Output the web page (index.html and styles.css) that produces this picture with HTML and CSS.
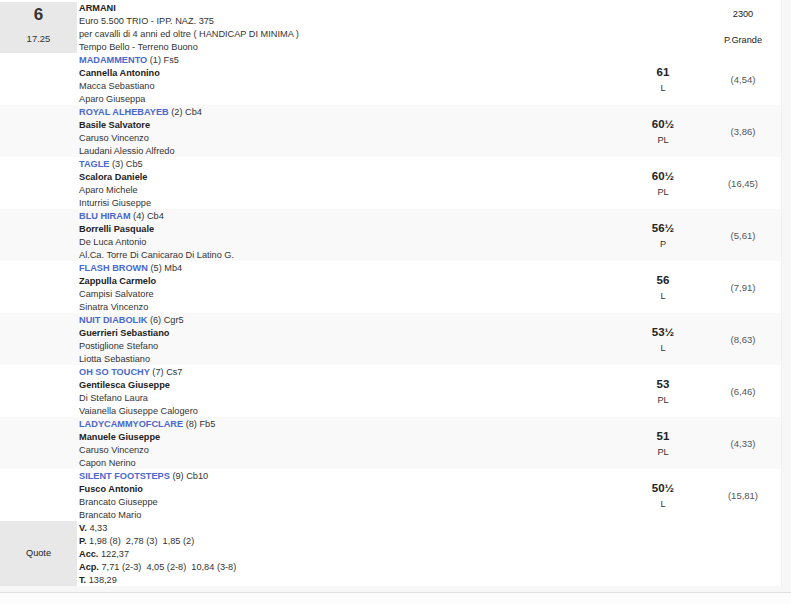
FILE: index.html
```html
<!DOCTYPE html>
<html>
<head>
<meta charset="utf-8">
<link rel="stylesheet" href="styles.css">
</head>
<body>
<div class="race">
  <div class="row head">
    <div class="c1 box">
      <div class="num">6</div>
      <div class="time">17.25</div>
    </div>
    <div class="c2">
      <div class="b">ARMANI</div>
      <div>Euro 5.500 TRIO - IPP. NAZ. 375</div>
      <div>per cavalli di 4 anni ed oltre ( HANDICAP DI MINIMA )</div>
      <div>Tempo Bello - Terreno Buono</div>
    </div>
    <div class="c3"></div>
    <div class="c4 headinfo">
      <div>2300</div>
      <div>P.Grande</div>
    </div>
  </div>

  <div class="row horse">
    <div class="c1"></div>
    <div class="c2">
      <div><span class="name">MADAMMENTO</span> (1) Fs5</div>
      <div class="b">Cannella Antonino</div>
      <div>Macca Sebastiano</div>
      <div>Aparo Giuseppa</div>
    </div>
    <div class="c3"><div class="w">61</div><div class="l">L</div></div>
    <div class="c4 q">(4,54)</div>
  </div>

  <div class="row horse alt">
    <div class="c1"></div>
    <div class="c2">
      <div><span class="name">ROYAL ALHEBAYEB</span> (2) Cb4</div>
      <div class="b">Basile Salvatore</div>
      <div>Caruso Vincenzo</div>
      <div>Laudani Alessio Alfredo</div>
    </div>
    <div class="c3"><div class="w">60½</div><div class="l">PL</div></div>
    <div class="c4 q">(3,86)</div>
  </div>

  <div class="row horse">
    <div class="c1"></div>
    <div class="c2">
      <div><span class="name">TAGLE</span> (3) Cb5</div>
      <div class="b">Scalora Daniele</div>
      <div>Aparo Michele</div>
      <div>Inturrisi Giuseppe</div>
    </div>
    <div class="c3"><div class="w">60½</div><div class="l">PL</div></div>
    <div class="c4 q">(16,45)</div>
  </div>

  <div class="row horse alt">
    <div class="c1"></div>
    <div class="c2">
      <div><span class="name">BLU HIRAM</span> (4) Cb4</div>
      <div class="b">Borrelli Pasquale</div>
      <div>De Luca Antonio</div>
      <div>Al.Ca. Torre Di Canicarao Di Latino G.</div>
    </div>
    <div class="c3"><div class="w">56½</div><div class="l">P</div></div>
    <div class="c4 q">(5,61)</div>
  </div>

  <div class="row horse">
    <div class="c1"></div>
    <div class="c2">
      <div><span class="name">FLASH BROWN</span> (5) Mb4</div>
      <div class="b">Zappulla Carmelo</div>
      <div>Campisi Salvatore</div>
      <div>Sinatra Vincenzo</div>
    </div>
    <div class="c3"><div class="w">56</div><div class="l">L</div></div>
    <div class="c4 q">(7,91)</div>
  </div>

  <div class="row horse alt">
    <div class="c1"></div>
    <div class="c2">
      <div><span class="name">NUIT DIABOLIK</span> (6) Cgr5</div>
      <div class="b">Guerrieri Sebastiano</div>
      <div>Postiglione Stefano</div>
      <div>Liotta Sebastiano</div>
    </div>
    <div class="c3"><div class="w">53½</div><div class="l">L</div></div>
    <div class="c4 q">(8,63)</div>
  </div>

  <div class="row horse">
    <div class="c1"></div>
    <div class="c2">
      <div><span class="name">OH SO TOUCHY</span> (7) Cs7</div>
      <div class="b">Gentilesca Giuseppe</div>
      <div>Di Stefano Laura</div>
      <div>Vaianella Giuseppe Calogero</div>
    </div>
    <div class="c3"><div class="w">53</div><div class="l">PL</div></div>
    <div class="c4 q">(6,46)</div>
  </div>

  <div class="row horse alt">
    <div class="c1"></div>
    <div class="c2">
      <div><span class="name">LADYCAMMYOFCLARE</span> (8) Fb5</div>
      <div class="b">Manuele Giuseppe</div>
      <div>Caruso Vincenzo</div>
      <div>Capon Nerino</div>
    </div>
    <div class="c3"><div class="w">51</div><div class="l">PL</div></div>
    <div class="c4 q">(4,33)</div>
  </div>

  <div class="row horse">
    <div class="c1"></div>
    <div class="c2">
      <div><span class="name">SILENT FOOTSTEPS</span> (9) Cb10</div>
      <div class="b">Fusco Antonio</div>
      <div>Brancato Giuseppe</div>
      <div>Brancato Mario</div>
    </div>
    <div class="c3"><div class="w">50½</div><div class="l">L</div></div>
    <div class="c4 q">(15,81)</div>
  </div>

  <div class="row quote">
    <div class="c1 box qbox">Quote</div>
    <div class="c2">
      <div><span class="b">V.</span> 4,33</div>
      <div><span class="b">P.</span> 1,98 (8)&nbsp; 2,78 (3)&nbsp; 1,85 (2)</div>
      <div><span class="b">Acc.</span> 122,37</div>
      <div><span class="b">Acp.</span> 7,71 (2-3)&nbsp; 4,05 (2-8)&nbsp; 10,84 (3-8)</div>
      <div><span class="b">T.</span> 138,29</div>
    </div>
    <div class="c3"></div>
    <div class="c4"></div>
  </div>
</div>
<div class="foot"></div>
</body>
</html>
```

FILE: styles.css
```css
html, body {
  margin: 0;
  padding: 0;
}
body {
  background: #f7f7f7;
  font-family: "Liberation Sans", Arial, sans-serif;
  font-size: 9.2px;
  line-height: 13px;
  color: #333;
  width: 791px;
  height: 604px;
  overflow: hidden;
}
.race {
  width: 781px;
  background: #fff;
  padding-top: 1px;
  border-right: 1px solid #f0f0f0;
}
.row {
  display: flex;
}
.c1 {
  width: 77px;
  flex: none;
}
.c2 {
  margin-left: 2px;
  padding-top: 1px;
  flex: 1;
  min-width: 0;
  white-space: nowrap;
}
.c3 {
  width: 84px;
  flex: none;
  display: flex;
  flex-direction: column;
  justify-content: center;
  align-items: center;
  padding-top: 2px;
}
.c4 {
  width: 76px;
  flex: none;
  display: flex;
  align-items: center;
  justify-content: center;
}
.box {
  background: #e8e8e8;
  color: #333;
}
.head .box {
  margin-top: 1px;
  height: 51px;
  display: flex;
  flex-direction: column;
  align-items: center;
}
.head .c2 {
  padding-top: 1px;
  margin-bottom: -1px;
}
.num {
  font-size: 17px;
  font-weight: bold;
  line-height: 20px;
  margin-top: 3px;
  color: #333;
}
.time {
  margin-top: 7px;
  font-size: 9.5px;
  line-height: 13px;
}
.headinfo {
  flex-direction: column;
  justify-content: flex-start;
  padding-top: 7px;
  color: #222;
}
.headinfo div + div {
  margin-top: 13px;
}
.b {
  font-weight: bold;
  color: #222;
}
.name {
  font-weight: bold;
  color: #4a68cc;
}
.horse {
  height: 52px;
}
.horse.alt {
  background: #f9f9f9;
}
.w {
  font-size: 11.5px;
  font-weight: bold;
  line-height: 16px;
  color: #222;
}
.l {
  font-size: 9.2px;
  line-height: 16px;
  color: #333;
}
.q {
  color: #555;
  font-size: 9.5px;
}
.quote {
  height: 65px;
}
.quote .c2 {
  margin-bottom: -1px;
}
.qbox {
  display: flex;
  align-items: center;
  justify-content: center;
  color: #222;
}
.foot {
  margin-top: 6px;
  width: 791px;
  border-top: 1px solid #e0e0e0;
  height: 12px;
  background: #fcfcfc;
}
```
